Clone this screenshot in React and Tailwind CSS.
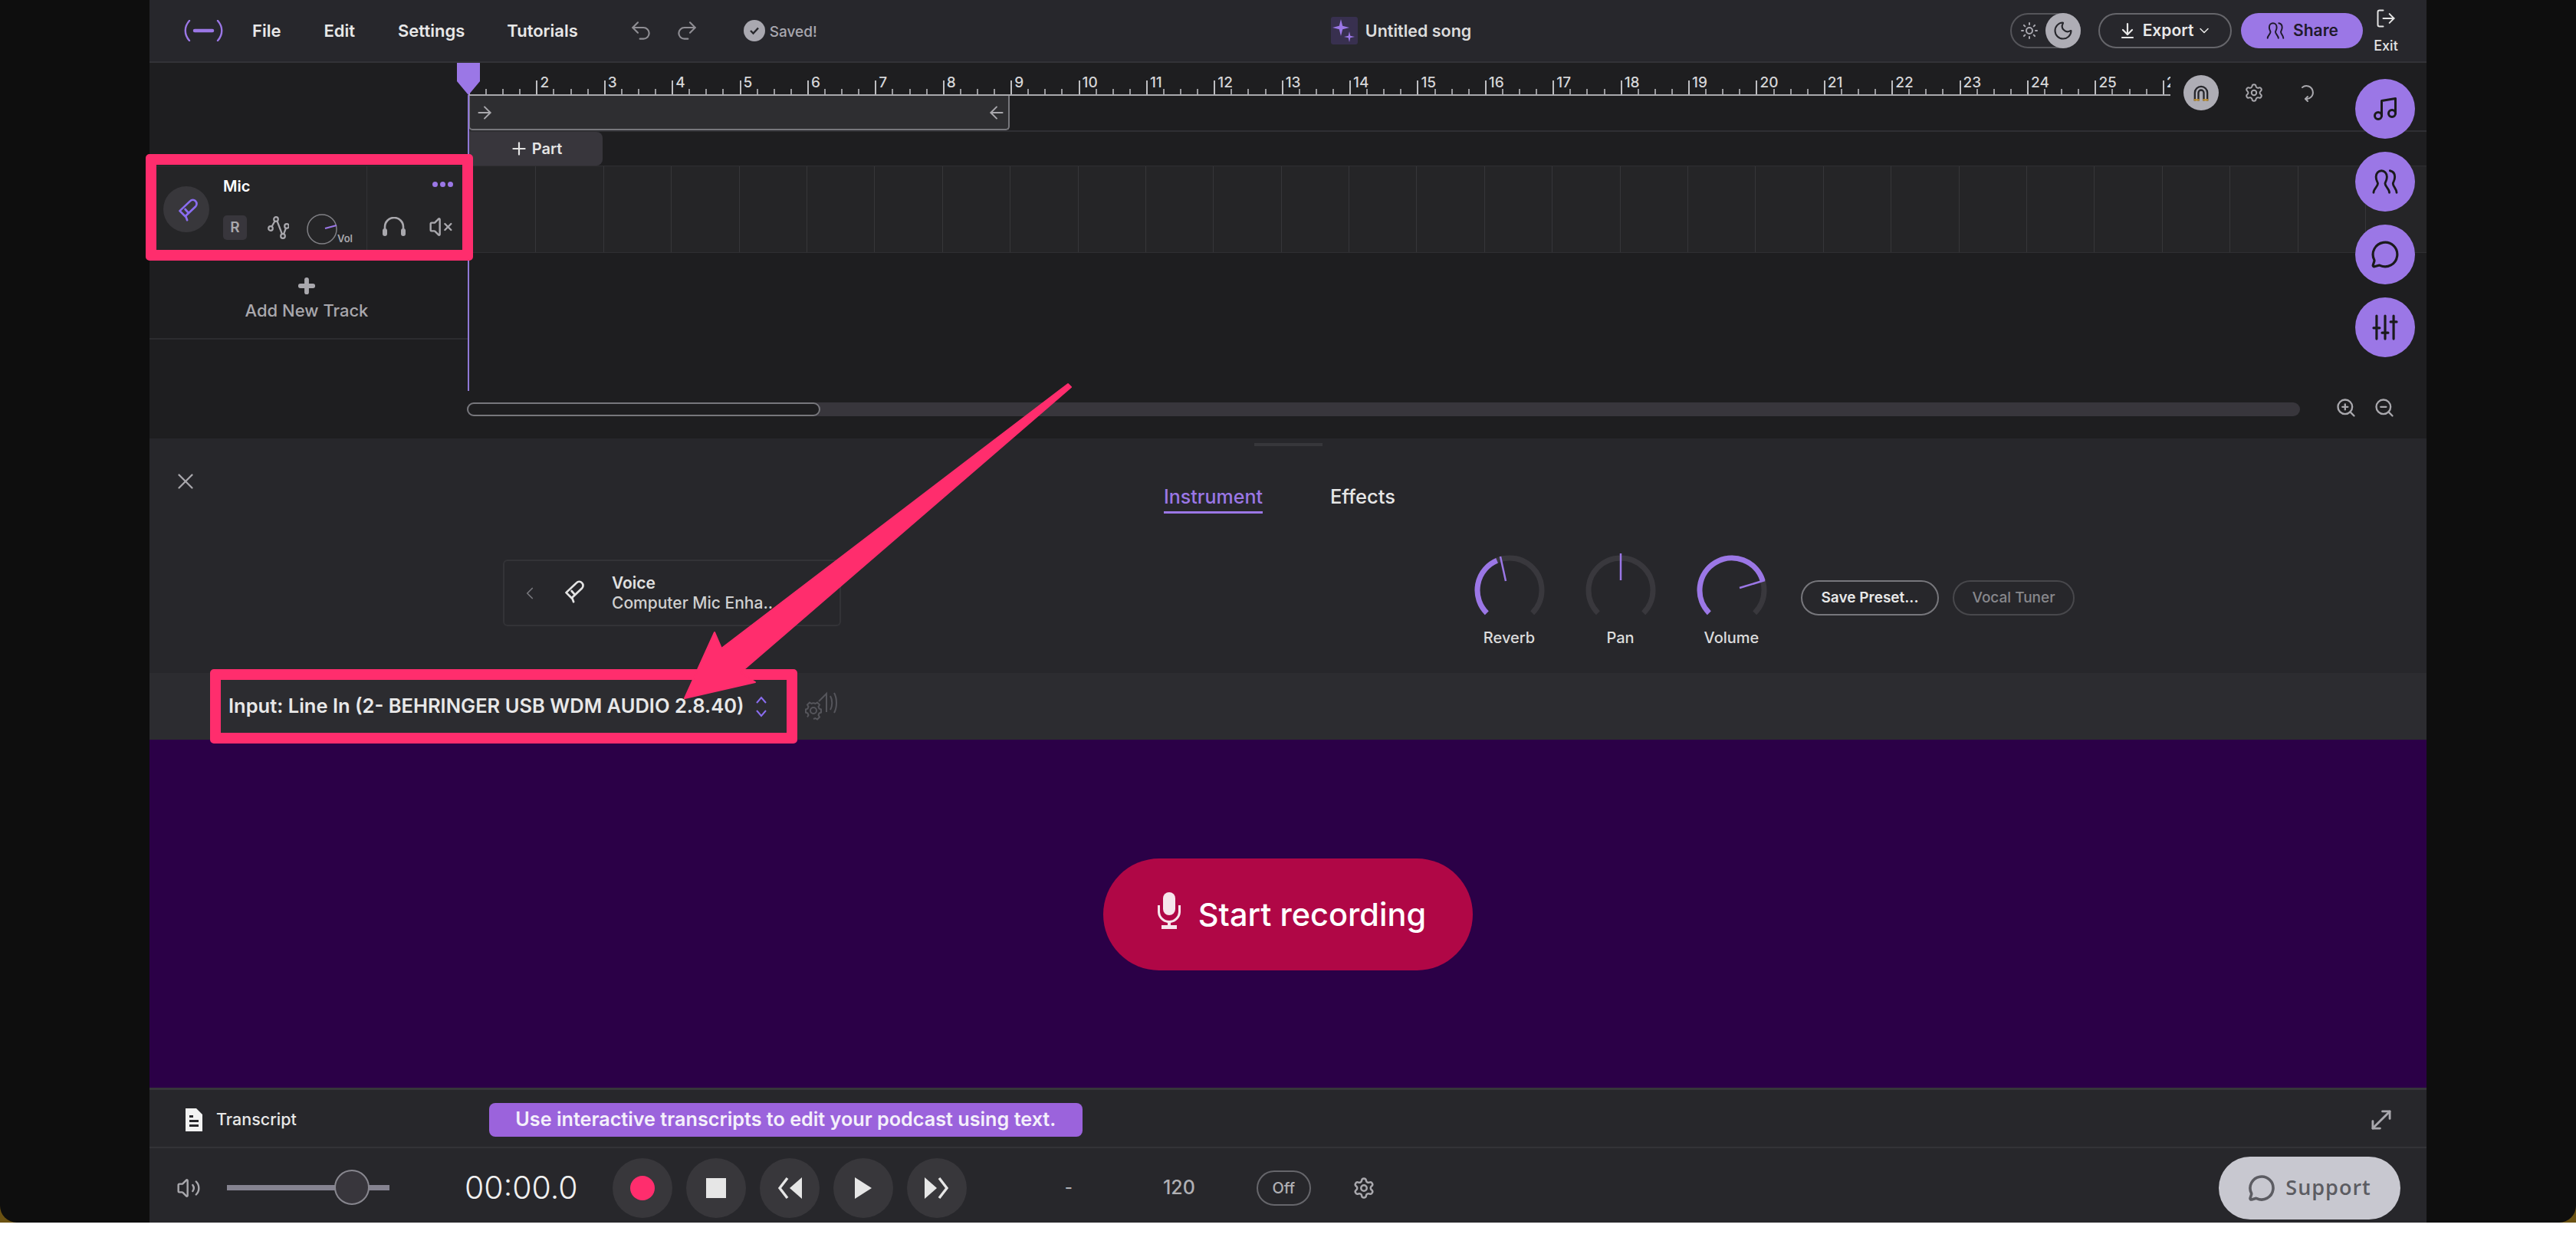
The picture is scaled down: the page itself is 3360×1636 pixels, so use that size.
import React from "react";
import {
  ArrowLeft,
  ArrowRight,
  ArrowDownToLine,
  ChevronDown,
  ChevronLeft,
  LogOut,
  MessageCircle,
  Moon,
  MoveDiagonal,
  Music,
  Plus,
  Redo2,
  Settings,
  Sun,
  Undo2,
  Volume2,
  VolumeX,
  X,
  ZoomIn,
  ZoomOut,
} from "lucide-react";

const BARS = Array.from({ length: 26 }, (_, i) => i + 1);
const GRID = Array.from({ length: 28 }, (_, i) => i);

const MicTilt = ({ className }) => (
  <svg viewBox="0 0 24 24" fill="none" stroke="currentColor" strokeWidth="1.9" strokeLinejoin="round" strokeLinecap="round" className={className}>
    <path d="M15.500 4.500a3.500 3.500 0 0 1 5 5L11 18.500 6 13.500Z" />
    <path d="M11 12l3 3.500M11.500 18.500l1.300 3.500" />
  </svg>
);

const PeopleIcon = ({ className }) => (
  <svg viewBox="0 0 24 24" fill="none" stroke="currentColor" strokeWidth="1.8" strokeLinecap="round" strokeLinejoin="round" className={className}>
    <path d="M2.500 21c0-3 3.500-5 3.500-7.500 0-1-1.500-2.500-1.500-5.500C4.500 5 6.500 3 9 3s4.500 2 4.500 5c0 3-1.500 4.500-1.500 5.500 0 2.500 3.500 4.500 3.500 7.500" />
    <path d="M16 3c2.500 .5 4 2.500 4 5 0 3-1.500 4.500-1.500 5.500 0 2.500 3 4.500 3 7.500" />
  </svg>
);

const MixerIcon = ({ className }) => (
  <svg viewBox="0 0 24 24" fill="none" stroke="currentColor" strokeWidth="2" strokeLinecap="round" className={className}>
    <path d="M5 2.500v19M12 2.500v19M19 2.500v19M2.500 12.500h5M9.500 16.500h5M16.500 7.500h5" />
  </svg>
);

const Logo = () => (
  <svg viewBox="0 0 51 28" fill="none" stroke="#9b77e6" strokeLinecap="round" className="w-[51px] h-[28px]">
    <path d="M7 1C0 9 0 19 7 27M44 1c7 8 7 18 0 26" strokeWidth="2.400" />
    <path d="M14 14h23" strokeWidth="4.500" />
  </svg>
);

const Sparkle = () => (
  <svg viewBox="0 0 35 36" fill="#9b77e6" className="w-[35px] h-[36px]">
    <path d="M13 3l2.200 8.800L24 14l-8.800 2.200L13 25l-2.200-8.800L2 14l8.800-2.200Z" />
    <path d="M24 19l1.300 5.700L31 26l-5.700 1.300L24 33l-1.300-5.700L17 26l5.700-1.300Z" />
  </svg>
);

const NodesIcon = () => (
  <svg viewBox="0 0 28 30" fill="none" stroke="#a9a8ad" strokeWidth="2.200" className="w-[28px] h-[30px]">
    <circle cx="11" cy="4" r="2.800" />
    <circle cx="4" cy="16" r="2.800" />
    <circle cx="25" cy="13" r="2.800" />
    <circle cx="20" cy="26" r="2.800" />
    <path d="M9.500 6.500 5.500 13.500M12.500 6.500l6.500 17M21 23.500l3-8" />
  </svg>
);

const Headphones = () => (
  <svg viewBox="0 0 32 26" fill="none" className="w-[32px] h-[26px]">
    <path d="M4 18V13a12 12 0 0 1 24 0v5" stroke="#a9a8ad" strokeWidth="2.600" />
    <rect x="1" y="15" width="6" height="10" rx="3" fill="#a9a8ad" />
    <rect x="25" y="15" width="6" height="10" rx="3" fill="#a9a8ad" />
  </svg>
);

const MagnetIcon = () => (
  <svg viewBox="0 0 24 24" fill="none" stroke="#27272c" strokeWidth="2" className="w-[28px] h-[28px]">
    <path d="M5 21v-9a7 7 0 0 1 14 0v9" />
    <path d="M9 21v-9a3 3 0 0 1 6 0v9" />
    <path d="M4 20h6M14 20h6" stroke="#c2912f" />
  </svg>
);

const LoopIcon = () => (
  <svg viewBox="0 0 24 28" fill="none" stroke="#a9a8ad" strokeWidth="2" strokeLinecap="round" strokeLinejoin="round" className="w-[24px] h-[28px]">
    <path d="M6 7A8.500 8.500 0 1 1 10 22" />
    <path d="M13 19l-3 3 3 3" />
  </svg>
);

const Arc = (r, from, to) => {
  const p = (deg) => {
    const a = ((deg - 90) * Math.PI) / 180;
    return `${(48 + r * Math.cos(a)).toFixed(2)} ${(48 + r * Math.sin(a)).toFixed(2)}`;
  };
  const large = to - from > 180 ? 1 : 0;
  return `M${p(from)}A${r} ${r} 0 ${large} 1 ${p(to)}`;
};

const Knob = ({ label, end, needle }) => (
  <div className="w-[145px] flex flex-col items-center shrink-0">
    <svg viewBox="0 0 96 96" fill="none" className="w-[96px] h-[96px]">
      <path d={Arc(42, -135, 135)} stroke="#39383d" strokeWidth="7" />
      {end !== null && <path d={Arc(42, -135, end)} stroke="#9b77e6" strokeWidth="7" />}
      <path d={needle} stroke="#9b77e6" strokeWidth="2.500" />
    </svg>
    <span className="text-[20px] leading-[24px] mt-[2px] text-[#dcdcdc] font-medium">{label}</span>
  </div>
);

const RoundButton = ({ children }) => (
  <button className="w-[78px] h-[78px] rounded-full bg-[#38373b] flex items-center justify-center shrink-0">
    {children}
  </button>
);

const SideButton = ({ children }) => (
  <button className="w-[78px] h-[78px] rounded-full bg-[#9b77e6] flex items-center justify-center text-[#1a1a1c]">
    {children}
  </button>
);

export default function App() {
  return (
    <div className="relative w-[3360px] h-[1636px] bg-white overflow-hidden font-['Inter',sans-serif]">
      <div className="h-[1595px] bg-[#6b5212]">
        <div className="h-full bg-[#0e0e0e] rounded-b-[22px] pl-[195px]">
          <div className="w-[2970px] h-full flex flex-col text-[#e4e4e4]">
            {/* top bar */}
            <header className="h-[82px] shrink-0 bg-[#27272c] border-b-2 border-[#323237] flex items-center pl-[45px]">
              <Logo />
              <nav className="flex items-center ml-[38px] text-[22px] font-semibold text-[#e8e8e8]">
                <span>File</span>
                <span className="ml-[56px]">Edit</span>
                <span className="ml-[56px]">Settings</span>
                <span className="ml-[55px]">Tutorials</span>
              </nav>
              <Undo2 className="ml-[66px] w-[32px] h-[32px] text-[#8f8e94]" strokeWidth={1.6} />
              <Redo2 className="ml-[28px] w-[32px] h-[32px] text-[#8f8e94]" strokeWidth={1.6} />
              <div className="ml-[58px] w-[28px] h-[28px] rounded-full bg-[#a9a8b0] flex items-center justify-center">
                <svg viewBox="0 0 16 16" fill="none" stroke="#27272c" strokeWidth="2.400" className="w-[16px] h-[16px]">
                  <path d="M3 8l3.500 3.500L13 4.500" />
                </svg>
              </div>
              <span className="ml-[6px] mt-[4px] text-[19px] text-[#a9a8b0] font-medium">Saved!</span>
              <div className="ml-[670px] w-[35px] h-[36px] rounded-[3px] bg-[#38304f] flex items-center justify-center">
                <Sparkle />
              </div>
              <span className="ml-[10px] text-[21.5px] font-semibold text-[#dcdcdc]">Untitled song</span>

              <div className="ml-auto flex items-center pr-[30px]">
                <div className="relative w-[92px] h-[46px] rounded-full border-2 border-[#55555a] flex items-center pl-[11px]">
                  <Sun className="w-[24px] h-[24px] text-[#a9a8b0]" strokeWidth={2} />
                  <div className="absolute -right-[2px] -top-[2px] w-[46px] h-[46px] rounded-full bg-[#aeadb5] flex items-center justify-center">
                    <Moon className="w-[28px] h-[28px] text-[#27272c]" strokeWidth={1.8} />
                  </div>
                </div>
                <button className="ml-[23px] w-[174px] h-[46px] rounded-full border-2 border-[#66666b] flex items-center justify-center text-[21px] font-semibold text-[#e8e8e8]">
                  <ArrowDownToLine className="w-[24px] h-[24px] mr-[8px]" strokeWidth={2.2} />
                  Export
                  <ChevronDown className="w-[20px] h-[20px] ml-[4px]" strokeWidth={1.8} />
                </button>
                <button className="ml-[12px] w-[159px] h-[46px] rounded-full bg-[#9b77e6] flex items-center justify-center text-[21px] font-semibold text-[#1f1a2b]">
                  <PeopleIcon className="w-[26px] h-[26px] mr-[10px]" />
                  Share
                </button>
                <div className="ml-[7px] w-[46px] flex flex-col items-center">
                  <LogOut className="w-[28px] h-[28px] text-[#e4e4e4]" strokeWidth={1.7} />
                  <span className="text-[18px] leading-[22px] font-medium text-[#e4e4e4] mt-[11px]">Exit</span>
                </div>
              </div>
            </header>

            {/* timeline */}
            <section className="relative h-[490px] shrink-0 bg-[#1e1e20] flex">
              <div className="w-[416px] shrink-0 flex flex-col">
                <div className="h-[134px] shrink-0" />
                <div className="h-[114px] shrink-0 bg-[#252527] flex border-y border-[#2f2f32] text-[#a9a8ad]">
                  <div className="w-[284px] shrink-0 border-r border-[#323235] pl-[18px] flex items-center">
                    <div className="w-[60px] h-[60px] rounded-full bg-[#38373b] flex items-center justify-center shrink-0">
                      <MicTilt className="w-[34px] h-[34px] text-[#8a6df0]" />
                    </div>
                    <div className="ml-[18px] pt-[14px] h-full flex flex-col">
                      <span className="text-[20px] leading-[24px] font-semibold text-white">Mic</span>
                      <div className="flex items-center mt-[24px]">
                        <div className="w-[31px] h-[32px] mb-[4px] rounded-[5px] bg-[#38363c] flex items-center justify-center text-[19px] font-semibold">R</div>
                        <div className="ml-[27px] mb-[4px]"><NodesIcon /></div>
                        <div className="relative ml-[23px]">
                          <svg viewBox="0 0 40 40" fill="none" className="w-[40px] h-[40px]">
                            <circle cx="20" cy="20" r="19" stroke="#808085" strokeWidth="1.500" />
                            <path d="M24 19l15-4" stroke="#9b77e6" strokeWidth="2.200" />
                          </svg>
                          <span className="absolute left-[40px] top-[23px] text-[13px] font-semibold">Vol</span>
                        </div>
                      </div>
                    </div>
                  </div>
                  <div className="flex-1 pl-[19px] pr-[20px] pt-[14px] flex flex-col">
                    <div className="flex justify-end gap-[3px] h-[18px] items-center">
                      <span className="w-[7px] h-[7px] rounded-full bg-[#9b77e6]" />
                      <span className="w-[7px] h-[7px] rounded-full bg-[#9b77e6]" />
                      <span className="w-[7px] h-[7px] rounded-full bg-[#9b77e6]" />
                    </div>
                    <div className="flex items-center justify-between mt-[31px]">
                      <Headphones />
                      <VolumeX className="w-[32px] h-[32px]" strokeWidth={1.8} />
                    </div>
                  </div>
                </div>
                <div className="h-[113px] shrink-0 border-b-2 border-[#2c2c2f] flex flex-col items-center pt-[29px] pr-[6px] text-[#a9a8ad]">
                  <Plus className="w-[28px] h-[28px]" strokeWidth={5} />
                  <span className="text-[22px] leading-[28px] font-medium mt-[4px]">Add New Track</span>
                </div>
              </div>

              <div className="flex-1 min-w-0 flex flex-col">
                {/* ruler and loop region */}
                <div className="h-[90px] shrink-0 flex border-b-2 border-[#2f2f33]">
                  <div className="w-[2220px] shrink-0 overflow-hidden flex flex-col">
                    <div className="h-[43px] shrink-0 flex items-end border-b-2 border-[#a9a9ad]">
                      {BARS.map((bar) => (
                        <div key={bar} className="w-[88.4px] shrink-0 flex items-end">
                          <div className="relative w-[22.1px] h-[18px] border-l-2 border-[#bdbdc0]">
                            {bar > 1 && (
                              <span className="absolute left-[3px] -top-[8px] text-[19px] leading-[22px] font-medium text-[#d6d6d8]">{bar}</span>
                            )}
                          </div>
                          <div className="w-[22.1px] h-[7px] border-l-2 border-[#9a9a9e]" />
                          <div className="w-[22.1px] h-[7px] border-l-2 border-[#9a9a9e]" />
                          <div className="w-[22.1px] h-[7px] border-l-2 border-[#9a9a9e]" />
                        </div>
                      ))}
                    </div>
                    <div className="h-[45px] w-[706px] bg-[#2e2e31] border-x-2 border-b-2 border-[#77777c] rounded-b-[5px] flex items-center justify-between pl-[6px] pr-[2px] text-[#a9a8ad]">
                      <ArrowRight className="w-[26px] h-[26px]" strokeWidth={1.8} />
                      <ArrowLeft className="w-[26px] h-[26px]" strokeWidth={1.8} />
                    </div>
                  </div>
                  <div className="flex items-center gap-[24px] ml-[17px] mb-[10px] text-[#a9a8ad]">
                    <div className="w-[46px] h-[46px] rounded-full bg-[#aeadb5] flex items-center justify-center"><MagnetIcon /></div>
                    <Settings className="ml-[9px] w-[26px] h-[26px]" strokeWidth={1.8} />
                    <div className="ml-[20px]"><LoopIcon /></div>
                  </div>
                </div>

                <div className="h-[44px] shrink-0">
                  <div className="w-[175px] h-full bg-[#38363c] rounded-r-[8px] flex items-center justify-center text-[20px] font-semibold text-[#e4e4e4]">
                    <Plus className="w-[26px] h-[26px] mr-[4px]" strokeWidth={2} />
                    Part
                  </div>
                </div>

                <div className="h-[114px] shrink-0 bg-[#252527] border-y border-[#2f2f32] flex">
                  {GRID.map((i) => (
                    <div key={i} className="w-[88.4px] shrink-0 border-r border-[#363639]" />
                  ))}
                </div>

                <div className="flex-1" />

                <div className="flex items-center pb-[26px]">
                  <div className="w-[2391px] -ml-[2px] h-[18px] rounded-full bg-[#38363c] shrink-0">
                    <div className="w-[461px] h-full rounded-full bg-[#1e1e20] border-2 border-[#77777c]" />
                  </div>
                  <ZoomIn className="ml-[46px] -mt-[4px] w-[28px] h-[28px] text-[#a9a8ad]" strokeWidth={2} />
                  <ZoomOut className="ml-[22px] -mt-[4px] w-[28px] h-[28px] text-[#a9a8ad]" strokeWidth={2} />
                </div>
              </div>

              {/* playhead */}
              <svg viewBox="0 0 30 42" className="absolute left-[401px] top-0 w-[30px] h-[42px]">
                <path d="M0 0H30V24L15 42 0 24Z" fill="#9b77e6" />
              </svg>
              <div className="absolute left-[415px] top-[42px] w-[2px] h-[386px] bg-[#8f78d6]" />

              {/* side actions */}
              <div className="absolute left-[2877px] top-[21px] flex flex-col gap-[17px]">
                <SideButton><Music className="w-[36px] h-[36px]" strokeWidth={2} /></SideButton>
                <SideButton><PeopleIcon className="w-[38px] h-[38px]" /></SideButton>
                <SideButton><MessageCircle className="w-[38px] h-[38px]" strokeWidth={2} /></SideButton>
                <SideButton><MixerIcon className="w-[38px] h-[38px]" /></SideButton>
              </div>
            </section>

            {/* instrument panel */}
            <section className="h-[306px] shrink-0 bg-[#27272b] flex flex-col">
              <div className="h-[6px] shrink-0" />
              <div className="self-center w-[89px] h-[4px] bg-[#37373b] shrink-0" />
              <div className="h-[88px] shrink-0 flex items-start">
                <X className="ml-[30px] mt-[29px] w-[34px] h-[34px] text-[#a9a8ad]" strokeWidth={1.6} />
                <div className="ml-[1259px] mt-[48px]">
                  <div className="text-[25px] leading-[36px] font-medium text-[#9b77e6] border-b-[3px] border-[#9b77e6] pb-[1px]">Instrument</div>
                </div>
                <div className="ml-[88px] mt-[48px] text-[25.5px] leading-[36px] font-medium text-[#e6e6e6]">Effects</div>
              </div>
              <div className="flex items-start ml-[461px]">
                <div className="mt-[60px] w-[441px] h-[87px] border-2 border-[#333337] rounded-[6px] flex items-center pl-[20px]">
                  <ChevronLeft className="w-[26px] h-[36px] text-[#77777c]" strokeWidth={1.6} />
                  <MicTilt className="ml-[26px] -mt-[6px] w-[34px] h-[34px] text-[#e4e4e4]" />
                  <div className="ml-[34px] flex flex-col">
                    <span className="text-[21px] leading-[26px] font-semibold text-[#e0e0e0]">Voice</span>
                    <span className="text-[21px] leading-[26px] font-medium text-[#d0d0d0]">Computer Mic Enha..</span>
                  </div>
                </div>
                <div className="ml-[799px] flex mt-[52px]">
                  <Knob label="Reverb" end={-23} needle="M43 36L36 4" />
                  <Knob label="Pan" end={null} needle="M48 35V0" />
                  <Knob label="Volume" end={73} needle="M58 45L91 35" />
                </div>
                <button className="ml-[18px] mt-[87px] w-[180px] h-[46px] rounded-full border-2 border-[#77777c] text-[19px] font-semibold text-[#e8e8e8]">Save Preset...</button>
                <button className="ml-[18px] mt-[87px] w-[159px] h-[46px] rounded-full border-2 border-[#48484c] text-[19px] font-medium text-[#88888c]">Vocal Tuner</button>
              </div>
            </section>

            {/* input select */}
            <section className="h-[87px] shrink-0 bg-[#2c2c30] flex items-center pl-[103px]">
              <span className="text-[25.5px] font-semibold text-[#e8e8e8] whitespace-nowrap">Input: Line In (2- BEHRINGER USB WDM AUDIO 2.8.40)</span>
              <svg viewBox="0 0 16 32" fill="none" stroke="#8a6df0" strokeWidth="2" className="ml-[15px] w-[16px] h-[32px]">
                <path d="M2 11l6-7 6 7M2 21l6 7 6-7" />
              </svg>
              <svg viewBox="0 0 44 40" fill="none" stroke="#55555b" strokeWidth="2" className="ml-[49px] -mt-[4px] w-[44px] h-[40px]">
                <circle cx="11" cy="27" r="4" />
                <path d="M11 17l2.500 1 2.500-1.500 3 3-1.500 2.500 1 2.500 2.500 1v4l-2.500 1-1 2.500 1.500 2.500-3 3-2.500-1.500-2.500 1M11 17l-2.500 1-2.500-1.500-3 3L4.500 22l-1 2.500-2.500 1v4l2.500 1 1 2.500L3 35.500" />
                <path d="M18 15l10-10v24M33 8c3 5 3 13 0 18M38 4c4 7 4 19 0 26" />
              </svg>
            </section>

            {/* record area */}
            <section className="h-[454px] shrink-0 bg-[#2b0047] flex items-start justify-center pt-[155px]">
              <button className="w-[482px] h-[146px] rounded-full bg-[#b00746] flex items-center justify-center pl-[8px] text-white text-[41.5px] font-medium">
                <svg viewBox="0 0 34 48" fill="#f6e6ec" className="w-[34px] h-[48px] mr-[21px] -mt-[10px]">
                  <rect x="9" y="0" width="16" height="30" rx="8" />
                  <path d="M2 17h3v8a12 12 0 0 0 24 0v-8h3v9a15 15 0 0 1-13 14v3h8v5H7v-5h8v-3A15 15 0 0 1 2 26Z" />
                </svg>
                Start recording
              </button>
            </section>

            {/* transcript strip */}
            <section className="h-[79px] shrink-0 bg-[#27272b] border-t-[3px] border-b-2 border-t-[#36363a] border-b-[#333337] flex items-center pl-[46px] pt-[3px]">
              <svg viewBox="0 0 24 30" className="w-[24px] h-[30px]">
                <path d="M1 0h14l8 8v22H1Z" fill="#f2f2f2" />
                <path d="M6 9h5v3H6ZM6 15h12v3H6ZM6 21h12v3H6Z" fill="#27272b" />
              </svg>
              <span className="ml-[17px] text-[21.5px] font-medium text-[#e8e8e8]">Transcript</span>
              <div className="ml-[251px] w-[774px] h-[44px] rounded-[8px] bg-[#9b63dc] flex items-center justify-center text-[25.2px] font-semibold text-[#f4f0fb] whitespace-nowrap">
                Use interactive transcripts to edit your podcast using text.
              </div>
              <MoveDiagonal className="ml-[1675px] w-[38px] h-[38px] text-[#a9a8ad]" strokeWidth={1.8} />
            </section>

            {/* transport */}
            <section className="flex-1 bg-[#27272b] flex items-center pl-[35px] pt-[6px]">
              <Volume2 className="w-[32px] h-[32px] text-[#a9a8ad]" strokeWidth={1.8} />
              <div className="relative ml-[34px] w-[212px] h-[7px] bg-[#858390]">
                <div className="absolute left-[140px] -top-[20px] w-[46px] h-[46px] rounded-full bg-[#38363c] border-2 border-[#88878f]" />
              </div>
              <span className="ml-[98px] text-[41px] font-light text-[#f0f0f0]">00:00.0</span>
              <div className="ml-[45px] flex gap-[18px]">
                <RoundButton><span className="w-[32px] h-[32px] rounded-full bg-[#ff2d6d]" /></RoundButton>
                <RoundButton><span className="w-[26px] h-[26px] bg-[#e6e6e6]" /></RoundButton>
                <RoundButton>
                  <svg viewBox="0 0 34 30" fill="none" className="w-[34px] h-[30px]">
                    <path d="M33 1v28L17 15Z" fill="#e6e6e6" />
                    <path d="M14 2 4 15l10 13" stroke="#e6e6e6" strokeWidth="3.400" />
                  </svg>
                </RoundButton>
                <RoundButton>
                  <svg viewBox="0 0 24 30" className="w-[24px] h-[30px]"><path d="M1 1v28l22-14Z" fill="#e6e6e6" /></svg>
                </RoundButton>
                <RoundButton>
                  <svg viewBox="0 0 34 30" fill="none" className="w-[34px] h-[30px]">
                    <path d="M1 1v28l16-14Z" fill="#e6e6e6" />
                    <path d="M20 2l10 13-10 13" stroke="#e6e6e6" strokeWidth="3.400" />
                  </svg>
                </RoundButton>
              </div>
              <span className="ml-[128px] text-[22px] font-medium text-[#b0b0b4]">-</span>
              <span className="ml-[118px] text-[25px] font-medium text-[#b0b0b4]">120</span>
              <div className="ml-[80px] w-[71px] h-[46px] rounded-full border-2 border-[#66666b] flex items-center justify-center text-[20px] font-medium text-[#b0b0b4]">Off</div>
              <Settings className="ml-[54px] w-[30px] h-[30px] text-[#a9a8ad]" strokeWidth={2} />
              <button className="ml-auto mr-[34px] w-[237px] h-[82px] rounded-full bg-[#c8c8d0] flex items-center justify-center text-[#5c5c62] text-[27px] font-semibold font-['Open_Sans',sans-serif] tracking-[1px]">
                <MessageCircle className="w-[36px] h-[36px] mr-[13px]" strokeWidth={2.4} />
                Support
              </button>
            </section>
          </div>
        </div>
      </div>

      {/* annotations drawn over the screenshot */}
      <div className="absolute left-[190px] top-[201px] w-[427px] h-[139px] rounded-[5px] border-[14px] border-[#ff2d6d]" />
      <div className="absolute left-[274px] top-[873px] w-[766px] h-[97px] rounded-[5px] border-[14px] border-[#ff2d6d]" />
      <svg viewBox="0 0 3360 1636" className="absolute inset-0 w-[3360px] h-[1636px] pointer-events-none">
        <path
          d="M1397 505L966 877L985 890L893 911L932 825L941 846L1393 501Z"
          fill="#ff2d6d"
          stroke="#ff2d6d"
          strokeWidth="2"
          strokeLinejoin="round"
        />
      </svg>
    </div>
  );
}
